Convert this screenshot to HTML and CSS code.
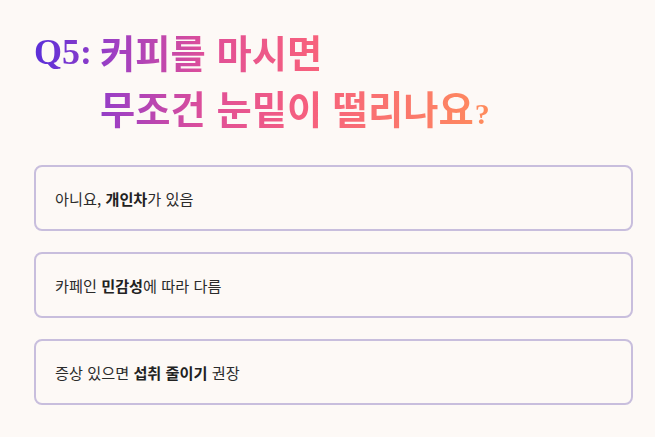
FILE: index.html
```html
<!DOCTYPE html>
<html lang="ko">
<head>
<meta charset="utf-8">
<link rel="stylesheet" href="styles.css">
</head>
<body>
<main class="quiz">
  <h1 class="title">
    <span class="qnum">Q5:</span>
    <span class="lines">
      <span class="line">커피를 마시면</span>
      <span class="line">무조건 눈밑이 떨리나요<span class="qmark">?</span></span>
    </span>
  </h1>
  <div class="options">
    <div class="option">아니요, <b>개인차</b>가 있음</div>
    <div class="option">카페인 <b>민감성</b>에 따라 다름</div>
    <div class="option">증상 있으면 <b>섭취 줄이기</b> 권장</div>
  </div>
</main>
</body>
</html>
```
FILE: styles.css
```css
html, body {
  margin: 0;
  padding: 0;
}
body {
  background: #fdf9f6;
  font-family: "Noto Sans CJK KR", "Noto Sans", sans-serif;
  color: #2b2b2b;
}
.quiz {
  padding: 24px 22px 0 34px;
}
.title {
  margin: 0;
  display: flex;
  width: max-content;
  align-items: flex-start;
  gap: 8px;
  font-size: 38.3px;
  font-weight: 700;
  line-height: 56px;
  height: 112px;
  background: linear-gradient(90deg, #5a2fd9 0%, #a040c2 18%, #e04f98 38%, #f6607e 60%, #ff8c5c 100%);
  -webkit-background-clip: text;
  background-clip: text;
  color: transparent;
}
.qnum, .qmark {
  font-family: "Liberation Serif", "DejaVu Serif", serif;
  font-weight: 700;
}
.qnum {
  font-size: 36px;
}
.qmark {
  font-size: 30px;
  line-height: 0;
  margin-left: 1px;
}
.lines {
  display: flex;
  flex-direction: column;
}
.line {
  display: block;
  white-space: nowrap;
  height: 56px;
}
.options {
  margin-top: 29px;
  display: flex;
  flex-direction: column;
  gap: 21px;
}
.option {
  border: 2px solid #c8bedd;
  border-radius: 8px;
  height: 66px;
  box-sizing: border-box;
  display: flex;
  align-items: center;
  padding: 0 19px;
  font-size: 15.2px;
  white-space: pre;
}
.option b {
  font-weight: 700;
  color: #222;
}
```
